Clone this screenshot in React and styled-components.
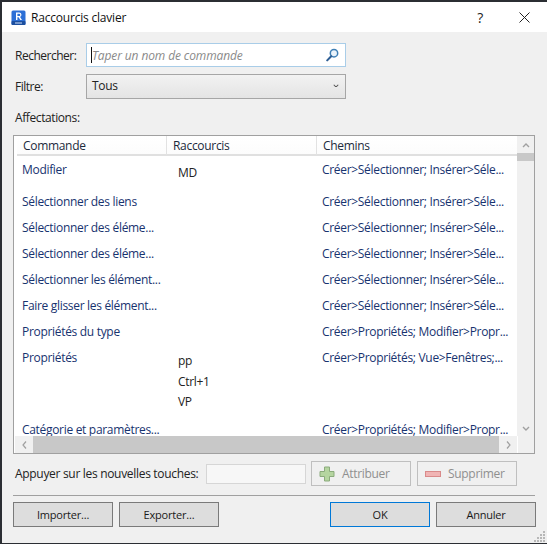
import React from "react";
import styled, { createGlobalStyle } from "styled-components";

const Global = createGlobalStyle`
  html, body { margin: 0; padding: 0; background: #2b2e33; }
  * { box-sizing: border-box; }
`;

const FONT = `"Open Sans", "Noto Sans", "Liberation Sans", sans-serif`;

const Frame = styled.div`
  width: 547px;
  height: 544px;
  padding: 2px 0 1px 2px;
  background: #2b2e33;
  overflow: hidden;
  font-family: ${FONT};
  font-size: 12px;
  letter-spacing: -0.31px;
  color: #1f1f1f;
`;
const Dialog = styled.div`
  height: 100%;
  display: flex;
  flex-direction: column;
  background: #f0f0f0;
  position: relative;
`;
const TitleBar = styled.header`
  height: 30px;
  flex: none;
  background: #fff;
  display: flex;
  align-items: center;
  padding-left: 9px;
`;
const TitleText = styled.h1`
  margin: 0 0 0 5px;
  font-size: 12px;
  font-weight: 400;
  color: #111;
  flex: 1;
  letter-spacing: -0.2px;
`;
const Help = styled.span`
  width: 20px;
  font-size: 14px;
  text-align: center;
  color: #222;
`;
const CloseBtn = styled.span`
  width: 20px;
  margin: 0 13px 0 24px;
  display: flex;
  justify-content: center;
`;
const Body = styled.main`
  flex: 1;
  display: flex;
  flex-direction: column;
  padding: 11px 11px 0 11px;
`;
const FieldRow = styled.div`
  display: flex;
  align-items: center;
  height: 24px;
  margin-bottom: 7px;
`;
const Label = styled.label`
  width: 73px;
  padding-left: 2px;
  color: #222;
  letter-spacing: -0.5px;
`;
const SearchBox = styled.div`
  width: 260px;
  height: 24px;
  border: 1px solid #a9cde8;
  background: #fff;
  display: flex;
  align-items: center;
  padding: 0 6px 0 4px;
`;
const Caret = styled.span`
  width: 1px;
  height: 16px;
  background: #111;
  flex: none;
`;
const Placeholder = styled.span`
  flex: 1;
  font-style: italic;
  color: #8a8a8a;
  letter-spacing: -0.12px;
`;
const Select = styled.div`
  width: 260px;
  height: 25px;
  border: 1px solid #a6a6a6;
  background: linear-gradient(#f2f2f2, #e4e4e4);
  display: flex;
  align-items: center;
  justify-content: space-between;
  padding: 0 6px 1px 5px;
  color: #222;
`;
const Section = styled.div`
  margin: 4px 0 8px 2px;
  height: 18px;
  line-height: 18px;
  color: #222;
  letter-spacing: -0.4px;
`;
const Table = styled.section`
  width: 522px;
  height: 319px;
  border: 1px solid #a0a0a0;
  background: #fff;
  display: grid;
  grid-template-columns: 1fr 17px;
  grid-template-rows: 1fr 17px;
  overflow: hidden;
`;
const TableMain = styled.div`
  overflow: hidden;
  padding-left: 3px;
`;
const HeaderRow = styled.div`
  height: 20px;
  display: grid;
  grid-template-columns: 150px 150px 200px;
  background: linear-gradient(#fff, #fcfcfc);
  border-bottom: 2px solid #e0e0e0;
`;
const HeaderCell = styled.div`
  padding: 1px 0 0 6px;
  line-height: 18px;
  color: #1c2a3c;
  border-right: 1px solid #e2e2e2;
  &:last-child { border-right: none; }
`;
const Row = styled.div`
  display: grid;
  grid-template-columns: 150px 150px 200px;
  height: ${(p) => p.$h}px;
`;
const Cell = styled.div`
  color: #17336f;
  padding: 5px 0 0 5px;
  line-height: 18px;
  white-space: nowrap;
  overflow: hidden;
`;
const Keys = styled.div`
  padding: 8px 0 0 11px;
  color: #222;
  display: flex;
  flex-direction: column;
  gap: 2.5px;
  line-height: 18px;
`;
const VScroll = styled.div`
  background: #f0f0f0;
  display: flex;
  flex-direction: column;
  align-items: center;
  padding-top: 2px;
`;
const ScrollArrow = styled.div`
  height: 15px;
  display: flex;
  align-items: center;
  justify-content: center;
  width: 100%;
`;
const VThumb = styled.div`
  width: 100%;
  height: 8px;
  background: #c8c8c8;
  margin-bottom: auto;
`;
const HScroll = styled.div`
  grid-column: 1;
  background: #c8c8c8;
  display: flex;
  justify-content: space-between;
  margin-left: 1px;
`;
const HArrow = styled.div`
  width: 18px;
  background: #f0f0f0;
  display: flex;
  align-items: center;
  justify-content: center;
`;
const Corner = styled.div`
  background: #f0f0f0;
  border-left: 1px solid #fff;
`;
const KeyRow = styled.div`
  display: flex;
  align-items: center;
  margin-top: 7px;
  height: 25px;
`;
const KeyLabel = styled.label`
  width: 193px;
  padding-left: 2px;
  color: #222;
`;
const KeyInput = styled.div`
  width: 100px;
  height: 20px;
  border: 1px solid #d6d6d6;
  background: #f7f7f7;
`;
const ActionBtn = styled.button`
  width: 100px;
  height: 25px;
  margin-left: ${(p) => p.$ml}px;
  border: 1px solid #bfbfbf;
  background: #f0f0f0;
  color: #8f8f8f;
  font: inherit;
  letter-spacing: inherit;
  display: flex;
  align-items: center;
  padding: 0 0 0 ${(p) => p.$pl}px;
  gap: ${(p) => p.$gap}px;
`;
const Divider = styled.hr`
  width: 522px;
  height: 1px;
  margin: 9px 0 6px;
  border: none;
  background: #a0a0a0;
`;
const Footer = styled.footer`
  display: flex;
  gap: 6px;
`;
const Btn = styled.button`
  width: 100px;
  height: 25px;
  border: 1px solid ${(p) => (p.$primary ? "#0078d7" : "#7a7a7a")};
  background: #dddddd;
  color: #1a1a1a;
  font: inherit;
  font-size: 11px;
  letter-spacing: -0.2px;
  padding: 0;
  margin-left: ${(p) => p.$ml || 0}px;
`;
const Grip = styled.svg`
  position: absolute;
  right: 1px;
  bottom: 1px;
`;

const Logo = () => (
  <svg width="15" height="15" viewBox="0 0 15 15">
    <rect x="0.5" y="0.5" width="14" height="14.5" rx="1.5" fill="#2c6fd6" />
    <rect x="0.5" y="11" width="14" height="4" rx="1" fill="#1c4f9f" />
    <path d="M5 2.5h3.2a2.3 2.3 0 0 1 .9 4.4L11 10H9.3L7.6 7.2H6.4V10H5z M6.4 3.7v2.4h1.7a1.2 1.2 0 0 0 0-2.4z" fill="#fff" fillRule="evenodd" />
    <rect x="4" y="12.5" width="7" height="1" fill="#cfe0f7" />
  </svg>
);
const CloseIcon = () => (
  <svg width="11" height="11" viewBox="0 0 11 11"><path d="M.5.5l10 10M10.5.5l-10 10" stroke="#222" strokeWidth="1" fill="none" /></svg>
);
const SearchIcon = () => (
  <svg width="13" height="14" viewBox="0 0 13 14">
    <circle cx="8" cy="5.2" r="3.7" fill="#eaf3fb" stroke="#3f7fb5" strokeWidth="1.5" />
    <path d="M5.2 8.2L1.2 12.4" stroke="#2f5f95" strokeWidth="2" strokeLinecap="round" />
  </svg>
);
const Chevron = ({ dir = "down", color = "#555", w = 8 }) => {
  const d = { down: "M1 1l3 3 3-3", up: "M1 4l3-3 3 3" }[dir];
  return <svg width={w} height={(w * 5) / 8} viewBox="0 0 8 5"><path d={d} stroke={color} strokeWidth="1.4" fill="none" /></svg>;
};
const Side = ({ dir }) => (
  <svg width="5" height="8" viewBox="0 0 5 8"><path d={dir === "left" ? "M4 .5L1 4l3 3.5" : "M1 .5L4 4 1 7.5"} stroke="#a0a0a0" strokeWidth="1.2" fill="none" /></svg>
);
const PlusIcon = () => (
  <svg width="16" height="16" viewBox="0 0 16 16">
    <path d="M5.5 1h5v4.5H15v5h-4.5V15h-5v-4.5H1v-5h4.5z" fill="#b5d5a0" stroke="#8bab7c" strokeWidth="1" />
  </svg>
);
const MinusIcon = () => (
  <svg width="16" height="6" viewBox="0 0 16 6">
    <rect x="0.5" y="0.5" width="15" height="5" fill="#f0b4b4" stroke="#d98a8a" />
  </svg>
);

const PATH_A = "Créer>Sélectionner; Insérer>Séle...";
const rows = [
  { h: 32, c: "Modifier", k: ["MD"], p: PATH_A },
  { h: 26, c: "Sélectionner des liens", p: PATH_A },
  { h: 26, c: "Sélectionner des éléme...", p: PATH_A },
  { h: 26, c: "Sélectionner des éléme...", p: PATH_A },
  { h: 26, c: "Sélectionner les élément...", p: PATH_A },
  { h: 26, c: "Faire glisser les élément...", p: PATH_A },
  { h: 26, c: "Propriétés du type", p: "Créer>Propriétés; Modifier>Propr..." },
  { h: 72, c: "Propriétés", k: ["pp", "Ctrl+1", "VP"], p: "Créer>Propriétés; Vue>Fenêtres;..." },
  { h: 26, c: "Catégorie et paramètres...", p: "Créer>Propriétés; Modifier>Propr..." },
];

export default function App() {
  return (
    <>
      <Global />
      <Frame>
        <Dialog>
          <TitleBar>
            <Logo />
            <TitleText>Raccourcis clavier</TitleText>
            <Help>?</Help>
            <CloseBtn><CloseIcon /></CloseBtn>
          </TitleBar>
          <Body>
            <FieldRow>
              <Label>Rechercher:</Label>
              <SearchBox>
                <Caret />
                <Placeholder>Taper un nom de commande</Placeholder>
                <SearchIcon />
              </SearchBox>
            </FieldRow>
            <FieldRow>
              <Label>Filtre:</Label>
              <Select>
                <span>Tous</span>
                <Chevron w={6} />
              </Select>
            </FieldRow>
            <Section>Affectations:</Section>
            <Table>
              <TableMain>
                <HeaderRow>
                  <HeaderCell>Commande</HeaderCell>
                  <HeaderCell>Raccourcis</HeaderCell>
                  <HeaderCell>Chemins</HeaderCell>
                </HeaderRow>
                {rows.map((r, i) => (
                  <Row key={i} $h={r.h}>
                    <Cell>{r.c}</Cell>
                    <Keys>{(r.k || []).map((k) => <span key={k}>{k}</span>)}</Keys>
                    <Cell>{r.p}</Cell>
                  </Row>
                ))}
              </TableMain>
              <VScroll>
                <ScrollArrow><Chevron dir="up" color="#a0a0a0" /></ScrollArrow>
                <VThumb />
                <ScrollArrow><Chevron dir="down" color="#a0a0a0" /></ScrollArrow>
              </VScroll>
              <HScroll>
                <HArrow><Side dir="left" /></HArrow>
                <HArrow><Side dir="right" /></HArrow>
              </HScroll>
              <Corner />
            </Table>
            <KeyRow>
              <KeyLabel>Appuyer sur les nouvelles touches:</KeyLabel>
              <KeyInput />
              <ActionBtn $ml={5} $pl={7} $gap={7}><PlusIcon />Attribuer</ActionBtn>
              <ActionBtn $ml={6} $pl={7} $gap={7}><MinusIcon />Supprimer</ActionBtn>
            </KeyRow>
            <Divider />
            <Footer>
              <Btn>Importer...</Btn>
              <Btn>Exporter...</Btn>
              <Btn $primary $ml={105}>OK</Btn>
              <Btn>Annuler</Btn>
            </Footer>
          </Body>
          <Grip width="12" height="12" viewBox="0 0 12 12" fill="#b8b8b8">
            <rect x="9" y="1" width="2" height="2" /><rect x="6" y="4" width="2" height="2" /><rect x="9" y="4" width="2" height="2" />
            <rect x="3" y="7" width="2" height="2" /><rect x="6" y="7" width="2" height="2" /><rect x="9" y="7" width="2" height="2" />
            <rect x="0" y="10" width="2" height="2" /><rect x="3" y="10" width="2" height="2" /><rect x="6" y="10" width="2" height="2" /><rect x="9" y="10" width="2" height="2" />
          </Grip>
        </Dialog>
      </Frame>
    </>
  );
}
